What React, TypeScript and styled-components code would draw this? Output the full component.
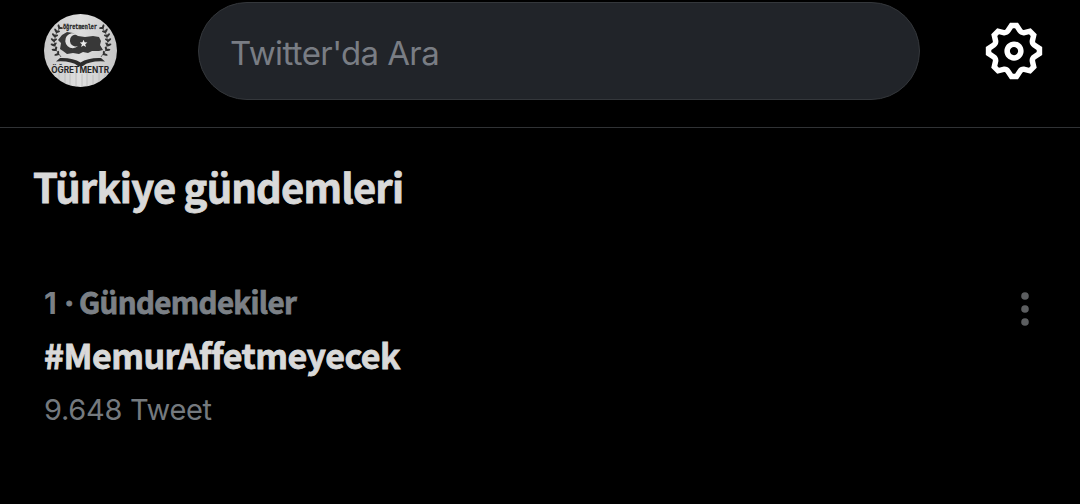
import React from "react";
import styled, { createGlobalStyle, css } from "styled-components";

const colors = {
  background: "#000000",
  field: "#212429",
  fieldBorder: "#34373b",
  divider: "#303235",
  text: "#d9d9d9",
  muted: "#74797e",
};

const GlobalStyle = createGlobalStyle`
  * {
    box-sizing: border-box;
  }
  body {
    margin: 0;
    background: ${colors.background};
    color: ${colors.text};
    font-family: "Noto Sans CJK SC", "Noto Sans", sans-serif;
    overflow: hidden;
  }
`;

const Page = styled.div`
  width: 1080px;
  height: 504px;
  background: ${colors.background};
`;

const TopBar = styled.header`
  display: flex;
  align-items: flex-start;
  height: 128px;
  padding: 2px 33px 0 44px;
  border-bottom: 1px solid ${colors.divider};
`;

const Avatar = styled.svg`
  flex: none;
  width: 73px;
  height: 73px;
  margin: 12px 81px 0 0;
`;

const SearchField = styled.div`
  display: flex;
  align-items: center;
  width: 722px;
  height: 98px;
  padding: 4px 0 0 31px;
  border: 1px solid ${colors.fieldBorder};
  border-radius: 49px;
  background: ${colors.field};
  color: #797d84;
  font-family: Inter, sans-serif;
  font-size: 33px;
  letter-spacing: -0.6px;
  line-height: 48px;
  white-space: nowrap;
`;

const SettingsButton = styled.button`
  display: flex;
  width: 66px;
  height: 66px;
  margin: 16px 0 0 auto;
  padding: 0;
  border: 0;
  background: none;
  svg {
    width: 66px;
    height: 66px;
    fill: #ffffff;
  }
`;

const heavy = css`
  font-weight: 700;
  -webkit-text-stroke: 0.8px currentColor;
`;

const Title = styled.h1`
  margin: 0;
  padding: 33px 0 0 33px;
  ${heavy}
  font-size: 40px;
  letter-spacing: -0.83px;
  line-height: 50px;
  white-space: nowrap;
`;

const Trend = styled.article`
  display: flex;
  justify-content: space-between;
  padding: 70px 50px 0 44px;
`;

const TrendText = styled.div`
  display: flex;
  flex-direction: column;
`;

interface LineProps {
  kind: "context" | "name" | "count";
}

const lineKinds = {
  context: css`
    ${heavy}
    height: 40px;
    color: #7b8086;
    font-size: 29.5px;
    letter-spacing: -0.65px;
    line-height: 40px;
  `,
  name: css`
    ${heavy}
    margin-top: 12px;
    font-size: 34px;
    letter-spacing: -0.55px;
    line-height: 44px;
  `,
  count: css`
    margin-top: 13px;
    color: ${colors.muted};
    font-family: Inter, sans-serif;
    font-size: 29px;
    letter-spacing: -0.3px;
    line-height: 40px;
  `,
};

const Line = styled.span<LineProps>`
  white-space: nowrap;
  ${(props) => lineKinds[props.kind]}
`;

const Rank = styled.span`
  display: inline-block;
  width: 15px;
  font-family: Inter, sans-serif;
  line-height: 30px;
  -webkit-text-stroke: 0;
`;

const Separator = styled.span`
  display: inline-block;
  width: 20px;
  font-family: "Open Sans", sans-serif;
  line-height: 30px;
  text-align: center;
`;

const MoreIcon = styled.svg`
  width: 10px;
  height: 36px;
  margin-top: 10px;
  fill: #5c5e60;
`;

const leaves = [
  [15, 41, 50],
  [12, 37, 30],
  [10.5, 32.5, 15],
  [10, 28, 0],
  [10.5, 23.5, -12],
  [12, 19, -25],
  [14.5, 15, -38],
];

function Laurel() {
  return (
    <g fill="#333333">
      <path d="M17 43Q4 29 16 13" fill="none" stroke="#333333" strokeWidth="0.7" />
      {leaves.map(([x, y, angle]) => (
        <g key={y} transform={`translate(${x} ${y}) rotate(${-angle})`}>
          <ellipse cx="-2" cy="-1" rx="2.5" ry="1.1" transform="rotate(35)" />
          <ellipse cx="2" cy="-1" rx="2.3" ry="1" transform="rotate(-35)" />
        </g>
      ))}
    </g>
  );
}

function ProfilePicture() {
  return (
    <Avatar viewBox="0 0 73 73">
      <defs>
        <clipPath id="face">
          <circle cx="36.5" cy="36.5" r="36.5" />
        </clipPath>
        <linearGradient id="steel" x1="0" y1="0" x2="1" y2="0">
          <stop offset="0" stopColor="#c9c9c9" />
          <stop offset="0.5" stopColor="#dedede" />
          <stop offset="1" stopColor="#c6c6c6" />
        </linearGradient>
      </defs>
      <g clipPath="url(#face)">
        <rect width="73" height="73" fill="url(#steel)" />
        <path
          d="M9 57v16M15 59v14M21 57v16M26 60v13M32 57v16M38 60v13M43 57v16M49 61v12M55 57v16M61 59v14"
          stroke="#b8b8b8"
          strokeWidth="0.8"
        />
        <Laurel />
        <g transform="translate(74 0) scale(-1 1)">
          <Laurel />
        </g>
        <text
          x="36"
          y="14.5"
          textAnchor="middle"
          textLength="34"
          lengthAdjust="spacingAndGlyphs"
          fontFamily="Liberation Mono, monospace"
          fontSize="7.5"
          fontWeight="700"
          fill="#222222"
          stroke="#222222"
          strokeWidth="0.3"
        >
          öğretmenler
        </text>
        <path
          d="M18 21l5-3 6 1 5 3 7 1 8-1 6 1 2 4-1 4 3 5-4 1-7 0-4 2-5-1-4 2-6-1-6 1-4-3-3-2 1-6-3-3z"
          fill="#383838"
        />
        <path d="M33 20.500a7.500 7.500 0 1 0 1 11.500 6 6 0 1 1-1-11.500z" fill="#e0e0e0" />
        <path
          d="M39.500 25.700l1.100 2.600 2.800.2-2.200 1.800.8 2.800-2.500-1.500-2.400 1.500.8-2.800-2.200-1.800 2.800-.2z"
          fill="#ededed"
        />
        <path
          d="M16 44Q29 43.500 36.500 48.500 44 43.500 57 44L61 47.500Q46 46.500 39 52H34Q27 46.500 12 47.500z"
          fill="#2c2c2c"
        />
        <text
          x="36.200"
          y="58.800"
          textAnchor="middle"
          textLength="58"
          lengthAdjust="spacingAndGlyphs"
          fontFamily="Inter, sans-serif"
          fontSize="8.300"
          fontWeight="700"
          fill="#252525"
        >
          ÖĞRETMENTR
        </text>
      </g>
    </Avatar>
  );
}

function SettingsIcon() {
  return (
    <svg viewBox="0 0 24 24">
      <path d="M10.54 1.75h2.92l1.57 2.36c.11.17.32.25.53.21l2.53-.59 2.17 2.17-.58 2.54c-.05.2.04.41.21.53l2.36 1.57v2.92l-2.36 1.57c-.17.12-.26.33-.21.53l.58 2.54-2.17 2.17-2.53-.59c-.21-.04-.42.04-.53.21l-1.57 2.36h-2.92l-1.58-2.36c-.11-.17-.32-.25-.52-.21l-2.54.59-2.17-2.17.58-2.54c.05-.2-.03-.41-.21-.53l-2.35-1.57v-2.92L4.1 8.97c.18-.12.26-.33.21-.53L3.73 5.9 5.9 3.73l2.54.59c.2.04.41-.04.52-.21l1.58-2.36zm1.07 2l-.98 1.47C10.05 6.08 9 6.5 7.99 6.27l-1.46-.34-.6.6.33 1.46c.24 1.01-.18 2.07-1.05 2.64l-1.46.98v.78l1.46.98c.87.57 1.29 1.63 1.05 2.64l-.33 1.46.6.6 1.46-.34c1.01-.23 2.06.19 2.64 1.05l.98 1.47h.78l.97-1.47c.58-.86 1.63-1.28 2.65-1.05l1.45.34.61-.6-.34-1.46c-.23-1.01.18-2.07 1.05-2.64l1.47-.98v-.78l-1.47-.98c-.87-.57-1.28-1.63-1.05-2.64l.34-1.46-.61-.6-1.45.34c-1.02.23-2.07-.19-2.65-1.05l-.97-1.47h-.78zM12 10.5c-.83 0-1.5.67-1.5 1.5s.67 1.5 1.5 1.5c.82 0 1.5-.67 1.5-1.5s-.68-1.5-1.5-1.5zM8.5 12c0-1.93 1.56-3.5 3.5-3.5 1.93 0 3.5 1.57 3.5 3.5s-1.57 3.5-3.5 3.5c-1.94 0-3.5-1.57-3.5-3.5z" />
    </svg>
  );
}

export default function App() {
  return (
    <>
      <GlobalStyle />
      <Page>
        <TopBar>
          <ProfilePicture />
          <SearchField>Twitter'da Ara</SearchField>
          <SettingsButton>
            <SettingsIcon />
          </SettingsButton>
        </TopBar>
        <Title>Türkiye gündemleri</Title>
        <Trend>
          <TrendText>
            <Line kind="context">
              <Rank>1</Rank>
              <Separator>·</Separator>Gündemdekiler
            </Line>
            <Line kind="name">#MemurAffetmeyecek</Line>
            <Line kind="count">9.648 Tweet</Line>
          </TrendText>
          <MoreIcon viewBox="0 0 10 36">
            <circle cx="5" cy="5" r="3.800" />
            <circle cx="5" cy="18" r="3.800" />
            <circle cx="5" cy="31" r="3.800" />
          </MoreIcon>
        </Trend>
      </Page>
    </>
  );
}
